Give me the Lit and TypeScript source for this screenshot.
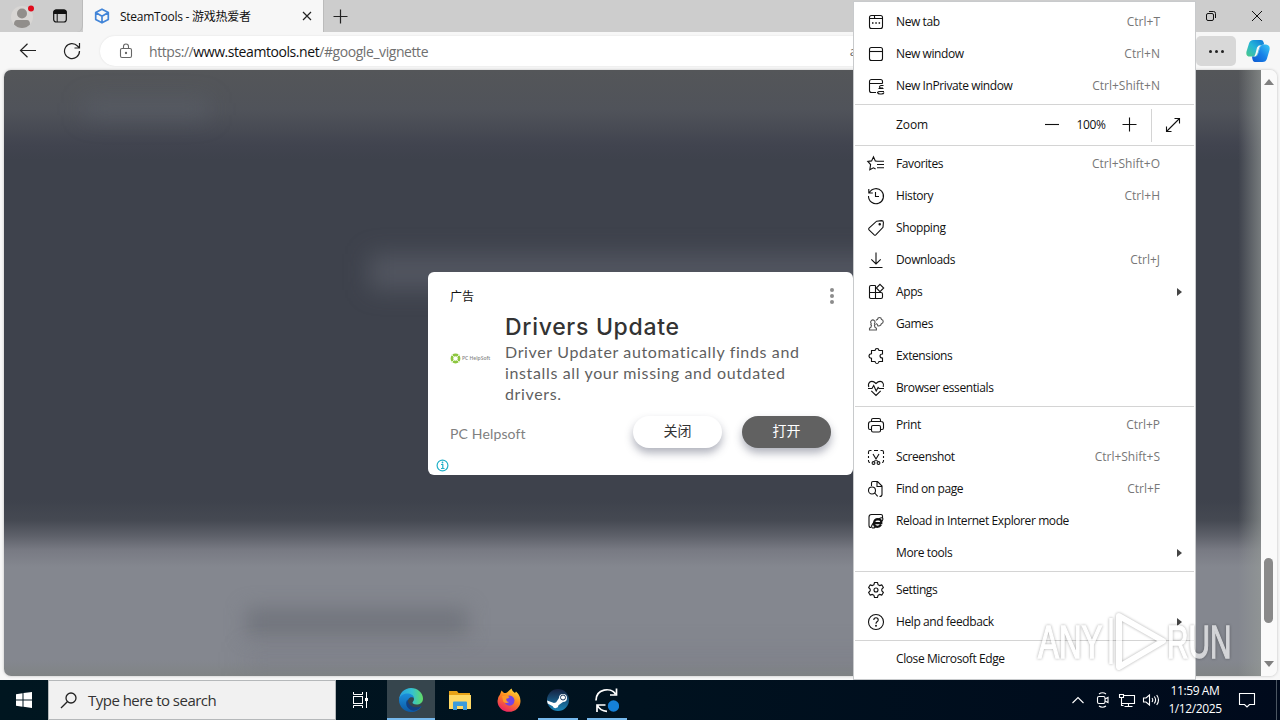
import { LitElement, css, html, svg } from 'lit'
import { customElement } from 'lit/decorators.js'

// all menu icons are drawn on a 20x20 grid
const icons: Record<string, any> = {
    tab: svg`<rect x="3.5" y="3.5" width="13" height="13" rx="2"/><path d="M3.5 6.500h5M8.500 3.500v2q0 1 1 1h7"/><path d="M6 11h1.500M9.300 11h1.500M12.600 11h1.500" stroke-width="1.600"/>`,
    window: svg`<rect x="3.500" y="3.500" width="13" height="13" rx="2"/><path d="M3.500 7.500h13"/>`,
    inprivate: svg`<path d="M10 16.500H5.500a2 2 0 0 1-2-2V5.500a2 2 0 0 1 2-2h9a2 2 0 0 1 2 2V7.500M3.500 7.500h13"/><path d="M17.500 9.500H15q-1.500.3-1.500 1.500 0 1 1.500 1h2M12.500 12.500h5M18 15.500h-4q-2 0-2.500 1 .5 1.500 2.500 1.500h1.500q2 0 2.500-1.500"/>`,
    favorites: svg`<path d="M10.800 7.200 9.300 6.900 7.500 2.800 5.600 6.900 1.800 7.500 4.600 10.500 3.800 15.800 7.400 13.800 9.600 15M10.800 7.200h7.200M11 10.500h7M11 13.700h7"/>`,
    history: svg`<path d="M2.800 3v4h4M3.300 6.800A7.500 7.500 0 1 1 2.500 10M9.500 6v4.500h3.500"/>`,
    shopping: svg`<path d="M10.600 3.200 15.500 2.600Q17.400 2.600 17.400 4.500L17 9.300 9.800 16.900Q9 17.600 8.200 16.900L3 11.800Q2.200 11 3 10.200Z"/><circle cx="13.700" cy="6.300" r=".7" fill="currentColor"/>`,
    downloads: svg`<path d="M10 2.500v11.500M5.300 9.400 10 14l4.700-4.600M3.500 17.500h13"/>`,
    apps: svg`<path d="M9.500 3.500H5A1.500 1.500 0 0 0 3.500 5v9.500A1.500 1.500 0 0 0 5 16.500h10a1.500 1.500 0 0 0 1.500-1.500v-3a1.500 1.500 0 0 0-1.500-1.500H3.500M9.500 3.500v13"/><path d="m14 2.300 3.700 3.700-3.700 3.700-3.700-3.700z"/>`,
    games: svg`<path stroke="#555" d="M5.200 9.700a2.200 2.200 0 1 1 3.300 0l.6 1-.7.500.5 2 1.500 1v1.800H3.500v-1.800l1.500-1 .5-2-.7-.5z"/><path stroke="#555" d="M10 6.500q.5-1 1.500-1 .2-2 2-2t2 2q1.700.2 1.700 2t-1.800 2.200q-.6 2.600-3.400 2.300-.5-2-2-2.500"/>`,
    extensions: svg`<path d="M7 4.500h2q.2-2 2-2t2 2h3.500v3.500q-2.500 0-2.500 2t2.500 2v3.500H13q-.2 2-2 2t-2-2H5.500v-3.300q-2.500-.2-2.500-2.200t2.500-2.200V4.500z"/>`,
    essentials: svg`<path d="M2.800 9Q1.800 6 3.500 4.300 6.500 2 10 5.500 13.500 2 16.500 4.300 18.200 6 17.200 9M5.300 12.800 10 17.500l4.700-4.700M2 10.500h4l1.700-3 2.500 5.500 1.900-3.500 1 1H18"/>`,
    print: svg`<path d="M5.500 6.500V5Q5.500 3.500 7 3.500h6q1.500 0 1.500 1.500v1.500M5.500 14.500H4q-1.500 0-1.500-1.500V9q0-2.500 2.500-2.500h10q2.500 0 2.500 2.500v4q0 1.500-1.500 1.500h-1.500"/><rect x="5.500" y="10.500" width="9" height="6.500" rx="1.500"/>`,
    screenshot: svg`<path d="M2.500 7V5Q2.500 3.500 4 3.500h1.500M8 3.500h4M14.500 3.500H16q1.500 0 1.500 1.500V7M17.500 9v2M17.500 13v1q0 1.500-1.500 1.500M2.500 9v2M2.500 13v1q0 1.500 1.500 1.500M7 7l4.500 7.500M13 7l-4.500 7.500"/><circle cx="7.500" cy="16" r="1.400"/><circle cx="12.500" cy="16" r="1.400"/>`,
    find: svg`<path d="M5.500 7V4Q5.500 2.500 7 2.500h4.500l4.500 4.500v8.500q0 2-2.500 2M11 3v4.500h4.800"/><circle cx="6" cy="11.500" r="3.500"/><path d="m8.700 14 3 3.300"/>`,
    ie: svg`<path d="M16.500 7V5Q16.500 3.500 15 3.500H5.500Q3 3.500 3 6v8.500Q3 16.500 5 16.500"/><path d="M15 13.700Q13.700 15.800 11.300 15.800 7.800 15.500 8 12 8.400 8.200 12 8.200q3.600.2 3.300 4H8.500" stroke-width="2.200"/><path d="M8 11q-4 5-1.500 6 1.300.3 3-1M13 7.700q3-1.700 3.800-.5.500 1-.8 3"/>`,
    settings: svg`<path d="M8.500 2.500h3l.6 2.300 1.500.8 2.300-.7 1.500 2.600-1.600 1.700v1.600l1.600 1.700-1.500 2.600-2.300-.7-1.500.8-.6 2.300h-3l-.6-2.300-1.500-.8-2.300.7-1.500-2.600 1.600-1.700V9.200L2.600 7.500l1.500-2.600 2.300.7 1.500-.8z" stroke-linejoin="round"/><circle cx="10" cy="10" r="2"/>`,
    help: svg`<circle cx="10" cy="10" r="7.500"/><path d="M7.800 8q0-2.200 2.200-2.200T12.200 8q0 1-1.200 1.800-1 .8-1 1.900"/><circle cx="10" cy="13.800" r=".4" fill="currentColor"/>`,
}

const groups: any[][] = [
    [['tab', 'New tab', 'Ctrl+T'], ['window', 'New window', 'Ctrl+N'], ['inprivate', 'New InPrivate window', 'Ctrl+Shift+N']],
    [
        ['favorites', 'Favorites', 'Ctrl+Shift+O'],
        ['history', 'History', 'Ctrl+H'],
        ['shopping', 'Shopping'],
        ['downloads', 'Downloads', 'Ctrl+J'],
        ['apps', 'Apps', '', true],
        ['games', 'Games'],
        ['extensions', 'Extensions'],
        ['essentials', 'Browser essentials'],
    ],
    [
        ['print', 'Print', 'Ctrl+P'],
        ['screenshot', 'Screenshot', 'Ctrl+Shift+S'],
        ['find', 'Find on page', 'Ctrl+F'],
        ['ie', 'Reload in Internet Explorer mode'],
        ['', 'More tools', '', true],
    ],
    [['settings', 'Settings'], ['help', 'Help and feedback', '', true]],
    [['', 'Close Microsoft Edge']],
]

@customElement('edge-menu')
export class EdgeMenu extends LitElement {

    row([icon, label, keys, sub]: any[]) {
        return html`
        <div class="row">
            <svg class="icon" viewBox="0 0 20 20">${icons[icon] ?? ''}</svg>
            <span class="label">${label}</span>
            <span class="keys">${keys}</span>
            ${sub ? html`<span class="arrow"></span>` : ''}
        </div>`
    }

    render() {
        return html`
        <div class="group">${groups[0].map(r => this.row(r))}</div>
        <div class="zoom">
            <span class="label">Zoom</span>
            <svg class="sign" viewBox="0 0 16 16"><path d="M1 7.500h14"/></svg>
            <span class="value">100%</span>
            <svg class="sign plus" viewBox="0 0 16 16"><path d="M.5 7.500h14M7.500.5v14"/></svg>
            <span class="full">
                <svg class="sign" viewBox="0 0 16 16"><path d="M1.500 14.500 14.500 1.500M9.500 1.500h5v5M1.500 9.500v5h5"/></svg>
            </span>
        </div>
        ${groups.slice(1).map(g => html`<div class="group">${g.map(r => this.row(r))}</div>`)}
        `
    }

    static get styles() {
        return css`
    :host{
        display:block;
        box-sizing:border-box;
        background-color:#fff;
        border:1px solid #c8cacc;
        padding:4px 1px 2px;
        font:12px "Open Sans","Noto Sans",sans-serif;
        color:#111;
    }
    svg{
        fill:none;
        stroke:currentColor;
        stroke-width:1.1;
        flex:none;
    }
    .group{
        padding:2px 0;
        border-bottom:1px solid #d4d4d4;
    }
    .group:first-of-type{
        padding-top:0;
    }
    .group:last-of-type{
        border:0;
    }
    .row{
        display:flex;
        align-items:center;
        height:32px;
        padding:0 34px 0 11px;
        position:relative;
    }
    .icon{
        width:20px;
        height:20px;
        margin-right:10px;
    }
    .label, .value{
        letter-spacing:-.4px;
        padding-bottom:1px;
    }
    .keys{
        margin-left:auto;
        padding-bottom:1px;
        color:#777;
    }
    .arrow{
        position:absolute;
        right:12px;
        border:4px solid transparent;
        border-left:5px solid #444;
        border-right:0;
    }
    .zoom{
        display:flex;
        align-items:center;
        height:40px;
        padding-left:41px;
        border-bottom:1px solid #d4d4d4;
    }
    .zoom .label{
        width:148px;
        letter-spacing:-.1px;
    }
    .sign{
        width:16px;
        height:16px;
    }
    .value{
        width:62px;
        text-align:center;
    }
    .full{
        display:flex;
        align-items:center;
        height:33px;
        margin-left:13px;
        padding-left:13px;
        border-left:1px solid #d4d4d4;
    }
    `
    }

}

@customElement('ad-card')
export class AdCard extends LitElement {

    render() {
        return html`
        <div class="top">
            <span class="tag">广告</span>
            <span class="dots"><i></i><i></i><i></i></span>
        </div>
        <div class="body">
            <div class="brand">
                <svg width="11" height="11" viewBox="0 0 11 11"><circle cx="5.500" cy="5.500" r="3.600" fill="none" stroke="#8cc63f" stroke-width="2.600"/><path d="M1.500 1.500l2.500 2.500M9.500 1.500 7 4M1.500 9.500l2.500-2.500M9.500 9.500 7 7" stroke="#e6f5cf"/></svg>
                <span>PC HelpSoft</span>
            </div>
            <div>
                <div class="title">Drivers Update</div>
                <div class="text">Driver Updater automatically finds and<br>installs all your missing and outdated<br>drivers.</div>
            </div>
        </div>
        <div class="bottom">
            <span class="name">PC Helpsoft</span>
            <span class="btn">关闭</span>
            <span class="btn dark">打开</span>
        </div>
        <svg class="info" viewBox="0 0 13 13"><circle cx="6.500" cy="6.500" r="5.400" fill="none" stroke="#22b0c8" stroke-width="1.200"/><path d="M5 5.500h1.800V9.500M5 9.500h3.500" fill="none" stroke="#22b0c8" stroke-width="1.200"/><circle cx="6.500" cy="3.500" r=".9" fill="#22b0c8"/></svg>
        `
    }

    static get styles() {
        return css`
    :host{
        display:block;
        box-sizing:border-box;
        background-color:#fff;
        border-radius:6px;
        padding:14px 22px 0;
        font-family:Lato,"Noto Sans CJK SC",sans-serif;
    }
    .top{
        display:flex;
        justify-content:space-between;
        height:26px;
    }
    .tag{
        font-size:12px;
        line-height:21px;
        color:#111;
    }
    .dots{
        display:flex;
        flex-direction:column;
        gap:2px;
        padding:2px 0 0;
        margin-right:-3px;
    }
    .dots i{
        width:4px;
        height:4px;
        border-radius:2px;
        background-color:#8c8c8c;
    }
    .body{
        display:flex;
        height:96px;
    }
    .brand{
        display:flex;
        align-items:center;
        width:55px;
        height:14px;
        margin-top:39px;
        flex:none;
        white-space:nowrap;
    }
    .brand span{
        font:600 5px "Open Sans",sans-serif;
        color:#888;
        margin-left:1px;
    }
    .title{
        padding-top:1px;
        font:500 23px/29px Inter,sans-serif;
        letter-spacing:.7px;
        color:#333;
    }
    .text{
        margin-top:-1px;
        font-size:16px;
        line-height:21px;
        letter-spacing:.64px;
        color:#5f5f5f;
        white-space:nowrap;
    }
    .bottom{
        display:flex;
        align-items:center;
        height:32px;
        margin-top:8px;
    }
    .name{
        flex:1;
        font-size:14px;
        letter-spacing:.15px;
        padding-top:3px;
        color:#808080;
    }
    .btn{
        width:89px;
        height:32px;
        line-height:29px;
        border-radius:16px;
        text-align:center;
        font-size:14px;
        color:#333;
        box-shadow:0 5px 9px rgba(60,64,90,.4);
    }
    .dark{
        margin-left:20px;
        background-color:#616161;
        color:#fff;
    }
    .info{
        display:block;
        width:13px;
        height:13px;
        margin:11px 0 0 -14px;
    }
    `
    }

}

@customElement('task-bar')
export class TaskBar extends LitElement {

    render() {
        return html`
        <span class="start">
            <svg width="16" height="16" viewBox="0 0 16 16"><path fill="#fff" d="M0 2.200 6.500 1.300v6.200H0zM7.500 1.100 16 0v7.500H7.500zM0 8.500h6.500v6.200L0 13.800zM7.500 8.500H16V16l-8.500-1.200z"/></svg>
        </span>
        <span class="search">
            <svg width="18" height="18" viewBox="0 0 18 18" fill="none" stroke="#222" stroke-width="1.300"><circle cx="11" cy="7" r="5"/><path d="M7.300 10.700 1 17"/></svg>
            <span class="hint">Type here to search</span>
        </span>
        <span class="task view">
            <svg width="18" height="18" viewBox="0 0 18 18" fill="none" stroke="#fff"><rect x="2.500" y="5.500" width="9" height="7"/><path d="M2.500 1v2.500h9V1M2.500 17v-2.500h9V17M15.500 1v16"/><path d="M14 7h3v3h-3z" fill="#fff" stroke="none"/></svg>
        </span>
        <span class="task active">
            <svg width="24" height="24" viewBox="0 0 24 24">
                <defs>
                    <linearGradient id="g1" x1="0" y1="0" x2="1" y2="0"><stop offset="0" stop-color="#269fe0"/><stop offset=".55" stop-color="#35c1d0"/><stop offset="1" stop-color="#62dc64"/></linearGradient>
                    <linearGradient id="g2" x1="0" y1="0" x2="0" y2="1"><stop offset="0" stop-color="#1b8fdc"/><stop offset="1" stop-color="#0c59a4"/></linearGradient>
                </defs>
                <path fill="url(#g1)" d="M0 11.500C.5 5 5.500 0 12 0s12 5 12 10.500c0 4-3 6-6.500 6-3 0-4-1.200-4-2 0-.8 1.500-1.300 1.500-3.500 0-2.500-2.500-4.500-6-4.500-4 0-8 2-9 5z"/>
                <path fill="url(#g2)" d="M0 12c.3-4 4-6.500 8.500-6.500 4 0 6.500 2.500 6.500 5-1-1.500-4-2-5.500.5-2 3.500.5 8.500 5.500 9 3 .3 5.500-.8 7.500-2C20.500 22 16.500 24 12 24 5.500 24 0 18.500 0 12z"/>
                <path fill="#123f82" d="M8.500 11.500c-2.500 3-1.500 9 4.500 11 4 .8 8-1.500 9.500-4.500-5 2.800-13 1.500-14-6.500z"/>
            </svg>
        </span>
        <span class="task">
            <svg width="22" height="19" viewBox="0 0 22 19"><path fill="#e8a317" d="M0 0h8l1.500 2H21v5H0z"/><path fill="#ffd965" d="M0 4h22v14H0z"/><path fill="#3b9bdb" d="M4 19v-7.500q0-1 1-1h12q1 0 1 1V19h-4v-4H8v4z"/></svg>
        </span>
        <span class="task">
            <svg width="24" height="24" viewBox="0 0 24 24">
                <defs><linearGradient id="ff" x1=".8" y1="0" x2=".3" y2="1"><stop offset="0" stop-color="#ffe13b"/><stop offset=".45" stop-color="#ff8a1f"/><stop offset="1" stop-color="#ec1f65"/></linearGradient></defs>
                <path fill="url(#ff)" d="M3 6.500 4.500 2.500 7 5q2 0 3-.5L14.500.5Q15 3.500 18 5l1-1.500q4.500 4 4.500 9.500A11.500 10.800 0 0 1 .5 13q0-4 2.500-6.500z"/>
                <path fill="#7543e3" d="M7.500 12.500Q8 8 12.500 7.500q4.500.5 5 5-.5 5-5 5.200-4.700-.2-5-5.200z"/>
                <path fill="#ff9a28" d="M5 8q4.500-1.300 7.500 1-1 1.600-3.300 1.800 0 3.200 3 3.200-3 2.300-6-.5z"/>
            </svg>
        </span>
        <span class="task open">
            <svg width="22" height="22" viewBox="0 0 22 22">
                <defs><linearGradient id="st" x1="0" y1="0" x2="0" y2="1"><stop offset="0" stop-color="#15203f"/><stop offset="1" stop-color="#1b86b8"/></linearGradient></defs>
                <circle cx="11" cy="11" r="11" fill="url(#st)"/>
                <path fill="#fff" d="M0 11.500 7 14q1-.6 2-.5l3-4.500a4 4 0 1 1 4 4l-4.500 3.200a3 3 0 0 1-5.800 1L.7 14.500z"/>
                <circle cx="16" cy="8.500" r="2.500" fill="#fff" stroke="#1c3a5e"/>
            </svg>
        </span>
        <span class="task open">
            <svg width="24" height="26" viewBox="0 0 24 26" fill="none" stroke="#fff" stroke-width="1.700"><path d="M1 13.500C1 1.500 16 0 20.500 7M21.500 1.500V8H15"/><path d="M10.500 18H2v7M2.500 18.500Q5 24 12 24.300"/><circle cx="18.500" cy="19" r="5.700" fill="#1580d8" stroke="none"/></svg>
        </span>
        <span class="tray">
            <svg class="chevron" width="14" height="20" viewBox="0 0 14 20"><path d="M1.500 13 7 7.500l5.500 5.500"/></svg>
            <svg class="meet" width="14" height="20" viewBox="0 0 14 20"><rect x="1.500" y="6.500" width="7.500" height="7" rx="1.500"/><path d="m9 9 3-1.500v5L9 11M3 4q3.500-2.500 7 0M3 16q3.500 2.500 7 0"/></svg>
            <svg class="net" width="18" height="20" viewBox="0 0 18 20"><path d="M6 5.500h10.500v8H4M10.500 13.500v3M6.500 16.500h8M1.500 4.500h4v3h-4zM3.500 7.500v8h2"/></svg>
            <svg class="sound" width="18" height="20" viewBox="0 0 18 20"><path d="M1.500 8v4H4l3.500 3V5L4 8zM10 8q1.500 2 0 4M12.300 6.500q2.600 3.500 0 7M14.700 5q3.600 5 0 10"/></svg>
            <span class="clock">11:59 AM<br>1/12/2025</span>
            <svg class="note" width="18" height="18" viewBox="0 0 18 18"><path d="M1.500 2.500h15v11h-5l-2.500 2.500-2.500-2.500h-5z"/></svg>
        </span>
        `
    }

    static get styles() {
        return css`
    :host{
        display:flex;
        height:40px;
        background:linear-gradient(90deg,#001620,#00121f 50%,#000a1c);
        font-family:"Open Sans","Noto Sans",sans-serif;
    }
    .start, .task{
        display:flex;
        align-items:center;
        justify-content:center;
        width:48px;
        box-sizing:border-box;
    }
    .search{
        box-sizing:border-box;
        width:288px;
        display:flex;
        align-items:center;
        gap:10px;
        padding:0 0 0 11px;
        background-color:#f1f1f1;
        border:1px solid #b5b8ba;
        font-size:15px;
        letter-spacing:-.52px;
        color:#333;
    }
    .task{
        margin-right:1px;
    }
    .view{
        margin-right:3px;
    }
    .active{
        background-color:#36454d;
        border-bottom:2px solid #76b9ed;
        padding-top:2px;
    }
    .open{
        width:40px;
        margin:0 5px 0 4px;
        border-bottom:2px solid #76b9ed;
        padding-top:2px;
    }
    .tray{
        display:flex;
        align-items:center;
        margin-left:auto;
        padding-right:3px;
        margin-right:3px;
        border-right:1px solid #4b5662;
    }
    .tray svg{
        fill:none;
        stroke:#fff;
        stroke-width:1.1;
    }
    .chevron{
        margin-right:11px;
    }
    .meet{
        margin-right:8px;
    }
    .net{
        margin-right:6px;
    }
    .sound{
        margin-right:5px;
    }
    .clock{
        width:60px;
        text-align:center;
        font-size:12px;
        letter-spacing:-.4px;
        line-height:18px;
        white-space:nowrap;
        color:#fff;
    }
    .note{
        margin:0 17px 0 13px;
    }
    `
    }

}

@customElement('app-root')
export class AppRoot extends LitElement {

    render() {
        return html`
        <div class="tabs">
            <div class="left">
                <svg width="26" height="26" viewBox="0 0 26 26"><circle cx="12" cy="14" r="11" fill="#d8d6d4"/><circle cx="12" cy="10.500" r="5" fill="#918e8b"/><path fill="#918e8b" d="M4 21.500q0-4.500 3-4.500h10q3 0 3 4.500-3.500 3.500-8 3.500t-8-3.500z"/><circle cx="21" cy="5.500" r="3" fill="#e00b1c"/></svg>
                <svg width="16" height="16" viewBox="0 0 16 16"><rect x="1.700" y="2" width="12.600" height="12" rx="2.500" fill="none" stroke="#111" stroke-width="1.200"/><path d="M1.500 6V4Q1.500 1.500 4 1.500h8Q14.500 1.500 14.500 4v2z" fill="#111"/><path d="M5.200 6v8" stroke="#111"/></svg>
            </div>
            <div class="tab">
                <svg width="16" height="16" viewBox="0 0 16 16" fill="none" stroke="#4285d8" stroke-width="1.700" stroke-linejoin="round"><path d="M8 1.200 14.300 4.600v6.800L8 14.800 1.700 11.400V4.600zM1.700 4.600 8 8.200l6.300-3.600M8 8.200v6.600"/></svg>
                <span class="name">SteamTools - 游戏热爱者</span>
                <svg width="10" height="10" viewBox="0 0 10 10" stroke="#222" stroke-width="1.200"><path d="m1 1 8 8M9 1 1 9"/></svg>
            </div>
            <svg class="add" width="15" height="15" viewBox="0 0 15 15" stroke="#222" stroke-width="1.200"><path d="M.5 7.500h14M7.500.5v14"/></svg>
            <svg class="restore" width="12" height="12" viewBox="0 0 12 12" fill="none" stroke="#111"><rect x="1.500" y="3.500" width="7" height="7" rx="1.500"/><path d="M4 1.500h4.500Q10.500 1.500 10.500 3.500V8"/></svg>
            <svg width="12" height="12" viewBox="0 0 12 12" stroke="#111"><path d="m1 1 10 10M11 1 1 11"/></svg>
        </div>
        <div class="toolbar">
            <svg width="18" height="18" viewBox="0 0 18 18" fill="none" stroke="#222" stroke-width="1.200"><path d="M17 8.500H1.500M8.500 1.800l-7 6.700 7 6.700"/></svg>
            <svg width="18" height="18" viewBox="0 0 18 18" fill="none" stroke="#222" stroke-width="1.200"><path d="M16.500 9A7.500 7.500 0 1 1 14.500 4l2 2M16.500 1v5h-5"/></svg>
            <div class="address">
                <svg width="14" height="16" viewBox="0 0 14 16" fill="none" stroke="#666" stroke-width="1.100"><rect x="1.500" y="5.500" width="11" height="9" rx="1.500"/><path d="M4.500 5.500V3.500a2.500 2.500 0 0 1 5 0v2"/><circle cx="7" cy="10" r=".6" fill="#666"/></svg>
                <span class="url">https://<b>www.steamtools.net</b>/#google_vignette</span>
                <span class="read">a</span>
            </div>
            <div class="more"><i></i><i></i><i></i></div>
            <svg class="copilot" width="24" height="24" viewBox="0 0 24 24">
                <defs>
                    <linearGradient id="c1" x1="1" y1="0" x2="0" y2="1"><stop offset="0" stop-color="#0d74d8"/><stop offset=".5" stop-color="#25b5d8"/><stop offset="1" stop-color="#4cc987"/></linearGradient>
                    <linearGradient id="c2" x1="1" y1="0" x2="0" y2="1"><stop offset="0" stop-color="#3ccbf5"/><stop offset=".5" stop-color="#1781e8"/><stop offset="1" stop-color="#0d58d0"/></linearGradient>
                </defs>
                <path fill="url(#c1)" d="M7.500 1H15q2 0 2.500 2l.7 2.500q-3-.5-4 2.500L12 15q-.8 2.500-3 2.500H4Q-.5 17.500.5 12.500L3 4.500Q4 1 7.500 1z"/>
                <path fill="url(#c2)" d="M16.500 23H9q-2.500 0-3-5.500h3q2.200 0 3-2.500l2.200-7Q15 5.500 17.500 5.500H20q4.500.5 3.500 5.500L21 19.500Q20 23 16.500 23z"/>
                <path fill="#f7f7f7" d="M11 8.500q1-2.500 4-2.500-1.500 1.500-2.300 4.500l-1.200 4q-.8 2.800-3.500 3 1.200-1.200 1.800-4z"/>
            </svg>
        </div>
        <div class="view">
            <div class="page">
                <div class="haze logo"></div>
                <div class="haze hero"></div>
                <div class="haze head"></div>
                <div class="haze para"></div>
            </div>
            <div class="scroll">
                <span class="up"></span>
                <span class="thumb"></span>
                <span class="down"></span>
            </div>
        </div>
        <task-bar></task-bar>
        <ad-card class="ad"></ad-card>
        <edge-menu class="menu"></edge-menu>
        <svg class="mark" width="196" height="64" viewBox="0 0 196 64">
            <g fill="#fff" stroke="#fff" stroke-width="1.400">
                <text transform="translate(1 49) scale(.7 1)" font-size="46" textLength="92" lengthAdjust="spacingAndGlyphs">ANY</text>
                <text transform="translate(130 49) scale(.62 1)" font-size="46" textLength="104" lengthAdjust="spacingAndGlyphs">RUN</text>
            </g>
            <g fill="none" stroke="#fff" stroke-linejoin="round">
                <path d="M82 7 126 32 82 58z" stroke-width="6"/>
                <path d="M74 9v46" stroke-width="3.500"/>
            </g>
        </svg>
        `
    }

    static get styles() {
        return css`
    :host{
        display:flex;
        flex-direction:column;
        position:relative;
        width:1280px;
        height:720px;
        overflow:hidden;
        background-color:#f7f7f7;
        font-family:"Open Sans","Noto Sans CJK SC",sans-serif;
    }
    .tabs{
        display:flex;
        align-items:center;
        height:32px;
        padding-right:17px;
        background-color:#cdcdcd;
        flex:none;
    }
    .left{
        display:flex;
        align-items:center;
        box-sizing:border-box;
        width:83px;
        height:32px;
        padding:0 0 1px 10px;
        gap:16px;
        border-radius:0 0 6px 0;
        border-right:1px solid #bbb;
    }
    .tab{
        box-sizing:border-box;
        display:flex;
        align-items:center;
        width:241px;
        height:32px;
        padding:0 11px 0 11px;
        background-color:#f7f7f7;
        border-right:1px solid #bbb;
    }
    .name{
        flex:1;
        margin-left:10px;
        padding-bottom:1px;
        font-size:12px;
        letter-spacing:-.25px;
        color:#111;
    }
    .add{
        margin-left:9px;
        margin-right:auto;
    }
    .restore{
        margin-right:34px;
    }
    .toolbar{
        display:flex;
        align-items:center;
        height:38px;
        padding:0 10px 0 19px;
        gap:26px;
        flex:none;
    }
    .address{
        flex:1;
        display:flex;
        align-items:center;
        height:30px;
        margin-left:-7px;
        padding-left:19px;
        border-radius:15px;
        background-color:#fff;
        box-shadow:0 0 2px #ddd;
    }
    .url{
        margin-left:16px;
        font-size:14px;
        letter-spacing:-.43px;
        color:#707070;
    }
    .url b{
        font-weight:400;
        color:#111;
    }
    .read{
        margin-left:auto;
        margin-right:333px;
        font-size:13px;
        color:#666;
    }
    .more{
        display:flex;
        align-items:center;
        justify-content:center;
        gap:3px;
        width:40px;
        height:30px;
        margin:0 -16px 0 -20px;
        border-radius:5px;
        background-color:#d8d8d8;
    }
    .more i{
        width:3px;
        height:3px;
        border-radius:2px;
        background-color:#222;
    }
    .view{
        display:flex;
        height:606px;
        margin:0 3px 4px 4px;
        flex:none;
        border-radius:7px;
        overflow:hidden;
        box-shadow:0 0 3px #bbb;
    }
    .page{
        position:relative;
        width:1257px;
        overflow:hidden;
        background:
            linear-gradient(90deg,transparent 98.2%,rgba(150,155,152,.65)),
            linear-gradient(180deg,#545659,#50535a 40px,#41444f 75px,#3e424c 90px,#3e424c 430px,#454952 450px,#5c5f68 465px,#787a83 480px,#84878f 497px,#84878f 590px,#808485);
    }
    .haze{
        position:absolute;
        filter:blur(12px);
    }
    .logo{
        left:80px;
        top:30px;
        width:125px;
        height:18px;
        background-color:rgba(110,115,130,.3);
    }
    .hero{
        left:365px;
        top:184px;
        width:520px;
        height:36px;
        background-color:rgba(120,124,135,.35);
    }
    .head{
        left:242px;
        top:538px;
        width:222px;
        height:28px;
        filter:blur(10px);
        background-color:rgba(100,103,112,.58);
    }
    .para{
        left:240px;
        top:580px;
        width:800px;
        height:20px;
        background-color:rgba(110,113,122,.25);
    }
    .scroll{
        display:flex;
        flex-direction:column;
        align-items:center;
        flex:1;
        background-color:#fafafa;
        padding:9px 1px 9px 0;
    }
    .up, .down{
        border:5px solid transparent;
        border-top:0;
        border-bottom:6px solid #808080;
    }
    .down{
        margin-top:auto;
        border-bottom:0;
        border-top:6px solid #808080;
    }
    .thumb{
        width:9px;
        height:65px;
        margin-top:473px;
        border-radius:5px;
        background-color:#8a8a8a;
    }
    task-bar{
        flex:none;
    }
    .ad{
        position:absolute;
        left:428px;
        top:272px;
        width:425px;
        height:203px;
    }
    .menu{
        position:absolute;
        left:853px;
        top:1px;
        width:343px;
        height:679px;
    }
    .mark{
        position:absolute;
        left:1037px;
        top:609px;
        opacity:.65;
        filter:drop-shadow(0 0 1.5px rgba(0,0,0,.5));
        font-family:"Liberation Sans",sans-serif;
    }
    `
    }

}
